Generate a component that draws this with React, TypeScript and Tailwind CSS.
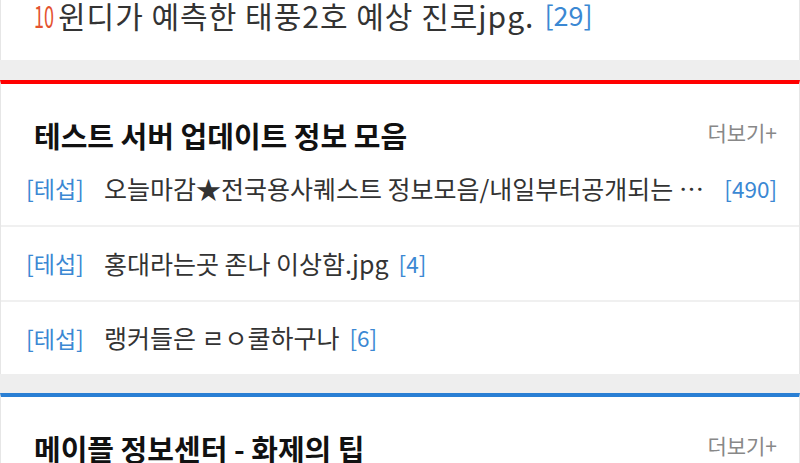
import React from 'react';

const FONT = "font-['Noto_Sans_CJK_KR','Noto_Sans',sans-serif]";

interface Post {
  tag: string;
  title: string;
  count: number;
  long?: boolean;
}

const testPosts: Post[] = [
  { tag: '테섭', title: '오늘마감★전국용사퀘스트 정보모음/내일부터공개되는 …', count: 490, long: true },
  { tag: '테섭', title: '홍대라는곳 존나 이상함.jpg', count: 4 },
  { tag: '테섭', title: '랭커들은 ㄹㅇ쿨하구나', count: 6 },
];

function SectionHeader({ title }: { title: string }) {
  return (
    <div className="flex items-start justify-between pl-[33px] pr-[22px] h-[68px] pt-[36px]">
      <h3 className="text-[29px] leading-[30px] font-bold text-[#111]">{title}</h3>
      <a className="text-[21px] leading-[22px] text-[#888] mt-[1px]">더보기+</a>
    </div>
  );
}

function PostRow({ post, last }: { post: Post; last: boolean }) {
  return (
    <div
      className={`flex items-center pl-[25px] pr-[22px] ${last ? 'h-[72px]' : 'h-[75px] border-b-2 border-[#f0f0f0]'}`}
    >
      <span className="text-[23px] text-[#3b88d3] shrink-0">[{post.tag}]</span>
      <span className={`ml-[20px] text-[25px] text-[#333] truncate min-w-0 ${post.long ? 'flex-1' : ''}`}>
        {post.title}
      </span>
      <span className="ml-[10px] text-[22.5px] text-[#3b88d3] shrink-0">[{post.count}]</span>
    </div>
  );
}

export default function App() {
  return (
    <div className={`${FONT} w-[800px] h-[463px] overflow-hidden bg-[#eeeeee]`}>
      {/* previous ranking card, scrolled off the top */}
      <div className="bg-white h-[60px] border-x border-[#e6e6e6]">
        <div className="flex items-center h-[30px] pl-[33px]">
          <span className="inline-block w-[19px] text-[30px] leading-[30px] text-[#e4532f] origin-left [transform:scaleX(0.6)]">
            10
          </span>
          <span className="ml-[5px] text-[30px] leading-[30px] text-[#333] tracking-[1px]">
            윈디가 예측한 태풍2호 예상 진로jpg.
          </span>
          <span className="ml-[10px] text-[27px] leading-[30px] text-[#3b88d3]">[29]</span>
        </div>
      </div>

      <div className="h-[20px]" />

      {/* test server section */}
      <div className="bg-white border-t-[4px] border-[#ff0000] border-x border-x-[#e6e6e6]">
        <SectionHeader title="테스트 서버 업데이트 정보 모음" />
        {testPosts.map((p, i) => (
          <PostRow key={i} post={p} last={i === testPosts.length - 1} />
        ))}
      </div>

      <div className="h-[19px]" />

      {/* maple info section */}
      <div className="bg-white border-t-[4px] border-[#2a7fd4] border-x border-x-[#e6e6e6]">
        <SectionHeader title="메이플 정보센터 - 화제의 팁" />
      </div>
    </div>
  );
}
